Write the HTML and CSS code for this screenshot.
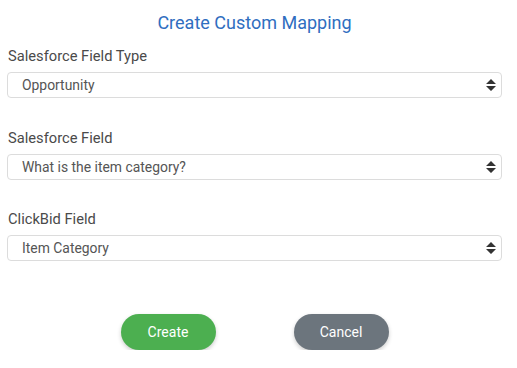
FILE: index.html
```html
<!DOCTYPE html>
<html>
<head>
<meta charset="utf-8">
<link rel="stylesheet" href="styles.css">
</head>
<body>
<div class="modal">
  <h2 class="title">Create Custom Mapping</h2>
  <div class="field">
    <label class="label">Salesforce Field Type</label>
    <div class="select-wrap">
      <select class="select"><option>Opportunity</option></select>
      <svg class="arrows" width="10" height="12" viewBox="0 0 10 12"><path d="M5 0 L10 5 L0 5 Z M0 7 L10 7 L5 12 Z" fill="#333"/></svg>
    </div>
  </div>
  <div class="field">
    <label class="label">Salesforce Field</label>
    <div class="select-wrap">
      <select class="select"><option>What is the item category?</option></select>
      <svg class="arrows" width="10" height="12" viewBox="0 0 10 12"><path d="M5 0 L10 5 L0 5 Z M0 7 L10 7 L5 12 Z" fill="#333"/></svg>
    </div>
  </div>
  <div class="field">
    <label class="label">ClickBid Field</label>
    <div class="select-wrap">
      <select class="select"><option>Item Category</option></select>
      <svg class="arrows" width="10" height="12" viewBox="0 0 10 12"><path d="M5 0 L10 5 L0 5 Z M0 7 L10 7 L5 12 Z" fill="#333"/></svg>
    </div>
  </div>
  <div class="actions">
    <button class="btn btn-create">Create</button>
    <button class="btn btn-cancel">Cancel</button>
  </div>
</div>
</body>
</html>
```
FILE: styles.css
```css
html, body {
  margin: 0;
  padding: 0;
  background: #fff;
  font-family: Roboto, "Liberation Sans", sans-serif;
}
.modal {
  width: 495px;
  margin-left: 7px;
  padding-top: 12px;
}
.title {
  margin: 0;
  text-align: center;
  font-size: 18px;
  font-weight: 400;
  line-height: 22px;
  color: #2f6ebf;
}
.field {
  display: flex;
  flex-direction: column;
  margin-top: 13px;
}
.field + .field {
  margin-top: 30.5px;
}
.label {
  font-size: 14.7px;
  line-height: 18px;
  color: #4a4a4a;
  margin-left: 1px;
  margin-bottom: 7px;
}
.select-wrap {
  position: relative;
}
.select {
  -webkit-appearance: none;
  appearance: none;
  display: block;
  width: 100%;
  height: 26px;
  box-sizing: border-box;
  border: 1px solid #dcdcdc;
  border-radius: 4px;
  background: #fff;
  padding: 0 30px 0 14px;
  font-family: Roboto, "Liberation Sans", sans-serif;
  font-size: 13.9px;
  color: #555;
  outline: none;
}
.arrows {
  position: absolute;
  right: 6px;
  top: 7px;
}
.actions {
  display: flex;
  justify-content: center;
  gap: 78px;
  margin-top: 53px;
}
.btn {
  width: 95px;
  height: 36px;
  border: none;
  border-radius: 18px;
  color: #fff;
  font-family: Roboto, "Liberation Sans", sans-serif;
  font-size: 14px;
  box-shadow: 0 2px 4px rgba(0,0,0,0.2);
}
.btn-create {
  background: #4caf50;
}
.btn-cancel {
  background: #6c757d;
}
```
